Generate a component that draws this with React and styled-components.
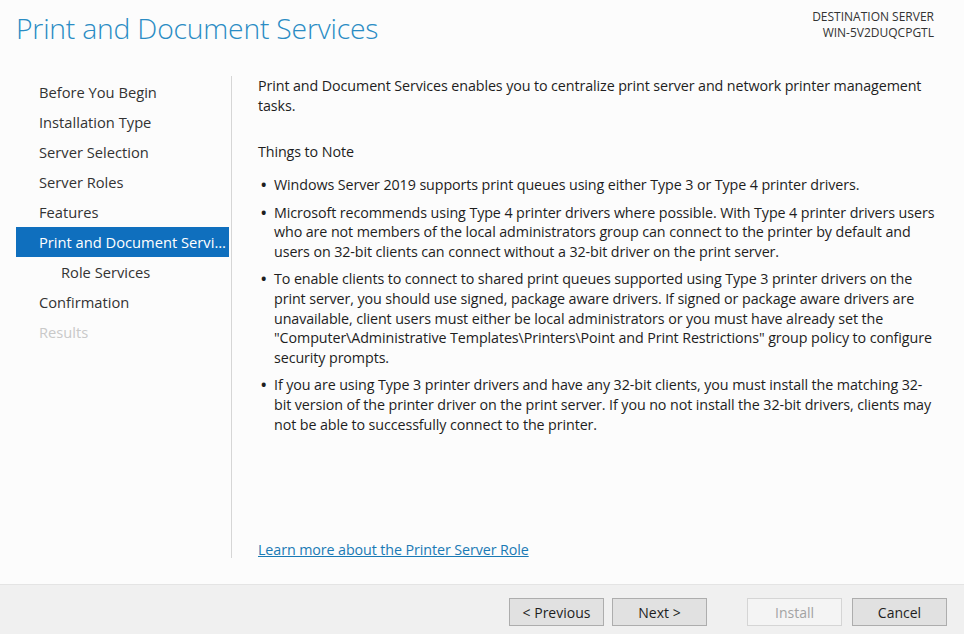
import React from 'react'
import styled, { createGlobalStyle } from 'styled-components'

const GlobalStyle = createGlobalStyle`
    html, body {
        margin:0;
        padding:0;
        height:100%;
    }
    body {
        font-family:"Open Sans", "Noto Sans", sans-serif;
        color:#1e1e1e;
        background:#fcfcfc;
    }
`;

const Window = styled.div`
    height:100vh;
    display:flex;
    flex-direction:column;
    background:#fcfcfc;
`;

const Header = styled.div`
    height:76px;
    flex-shrink:0;
    display:flex;
    justify-content:space-between;
    align-items:flex-start;
    padding:0 30px 0 16px;
    box-sizing:border-box;
`;

const Title = styled.h1`
    margin:9px 0 0;
    font-size:28.3px;
    font-weight:300;
    color:#2a8cc4;
    line-height:38px;
    letter-spacing:-0.2px;
`;

const Destination = styled.div`
    margin-top:9px;
    text-align:right;
    font-size:12px;
    line-height:16px;
    color:#333;
`;

const Main = styled.div`
    flex:1;
    display:flex;
    padding:0 0 26px 16px;
    min-height:0;
`;

const Sidebar = styled.ul`
    width:213px;
    margin:0;
    padding:1px 2px 0 0;
    list-style:none;
    border-right:1px solid #d6d6d6;
`;

const Step = styled.li`
    height:30px;
    line-height:30px;
    padding-left:${props => props.sub ? 45 : 23}px;
    font-size:14.7px;
    white-space:nowrap;
    overflow:hidden;
    text-overflow:ellipsis;
    color:${props => props.active ? '#ffffff' : props.disabled ? '#c9c9c9' : '#333333'};
    background:${props => props.active ? '#0f6fbe' : 'transparent'};
`;

const Content = styled.div`
    flex:1;
    display:flex;
    flex-direction:column;
    padding:0 26px 0 26px;
    font-size:14.3px;
    line-height:20px;
    letter-spacing:-0.1px;
`;

const Intro = styled.p`
    margin:0;
`;

const Subtitle = styled.p`
    margin:26px 0 13px;
`;

const Notes = styled.ul`
    margin:0;
    padding:0;
    list-style:none;
`;

const Note = styled.li`
    position:relative;
    padding-left:16px;
    margin-bottom:8px;
    line-height:19.6px;

    &::before{
        content:'•';
        position:absolute;
        left:3px;
        top:0;
        font-weight:700;
    }
`;

const LearnMore = styled.a`
    margin-top:auto;
    margin-bottom:-2px;
    color:#1a7ab5;
    text-decoration:underline;
    cursor:pointer;
    align-self:flex-start;
`;

const Footer = styled.div`
    height:50px;
    flex-shrink:0;
    display:flex;
    align-items:flex-start;
    justify-content:flex-end;
    padding:13px 17px 0 0;
    background:#f0f0f0;
    border-top:1px solid #e4e4e4;
    box-sizing:border-box;
`;

const Button = styled.button`
    width:95px;
    height:28px;
    margin-left:${props => props.gap}px;
    font-family:inherit;
    font-size:14px;
    color:${props => props.disabled ? '#a3a3a3' : '#1e1e1e'};
    background:${props => props.disabled ? '#f4f4f4' : '#e1e1e1'};
    border:1px solid ${props => props.disabled ? '#d5d5d5' : '#adadad'};
    border-radius:0;
    padding:0;
`;

const steps = [
    { label: 'Before You Begin' },
    { label: 'Installation Type' },
    { label: 'Server Selection' },
    { label: 'Server Roles' },
    { label: 'Features' },
    { label: 'Print and Document Services', active: true },
    { label: 'Role Services', sub: true },
    { label: 'Confirmation' },
    { label: 'Results', disabled: true },
]

const App = () => {
    return (
        <Window>
            <GlobalStyle />
            <Header>
                <Title>Print and Document Services</Title>
                <Destination>
                    DESTINATION SERVER<br />
                    WIN-5V2DUQCPGTL
                </Destination>
            </Header>
            <Main>
                <Sidebar>
                    {steps.map(s => (
                        <Step key={s.label} active={s.active} sub={s.sub} disabled={s.disabled}>{s.label}</Step>
                    ))}
                </Sidebar>
                <Content>
                    <Intro>Print and Document Services enables you to centralize print server and network printer management tasks.</Intro>
                    <Subtitle>Things to Note</Subtitle>
                    <Notes>
                        <Note>Windows Server 2019 supports print queues using either Type 3 or Type 4 printer drivers.</Note>
                        <Note>Microsoft recommends using Type 4 printer drivers where possible. With Type 4 printer drivers users who are not members of the local administrators group can connect to the printer by default and users on 32-bit clients can connect without a 32-bit driver on the print server.</Note>
                        <Note>To enable clients to connect to shared print queues supported using Type 3 printer drivers on the print server, you should use signed, package aware drivers. If signed or package aware drivers are unavailable, client users must either be local administrators or you must have already set the "Computer\Administrative Templates\Printers\Point and Print Restrictions" group policy to configure security prompts.</Note>
                        <Note>If you are using Type 3 printer drivers and have any 32-bit clients, you must install the matching 32-bit version of the printer driver on the print server. If you no not install the 32-bit drivers, clients may not be able to successfully connect to the printer.</Note>
                    </Notes>
                    <LearnMore>Learn more about the Printer Server Role</LearnMore>
                </Content>
            </Main>
            <Footer>
                <Button gap={0}>&lt; Previous</Button>
                <Button gap={8}>Next &gt;</Button>
                <Button gap={40} disabled>Install</Button>
                <Button gap={10}>Cancel</Button>
            </Footer>
        </Window>
    )
}

export default App
